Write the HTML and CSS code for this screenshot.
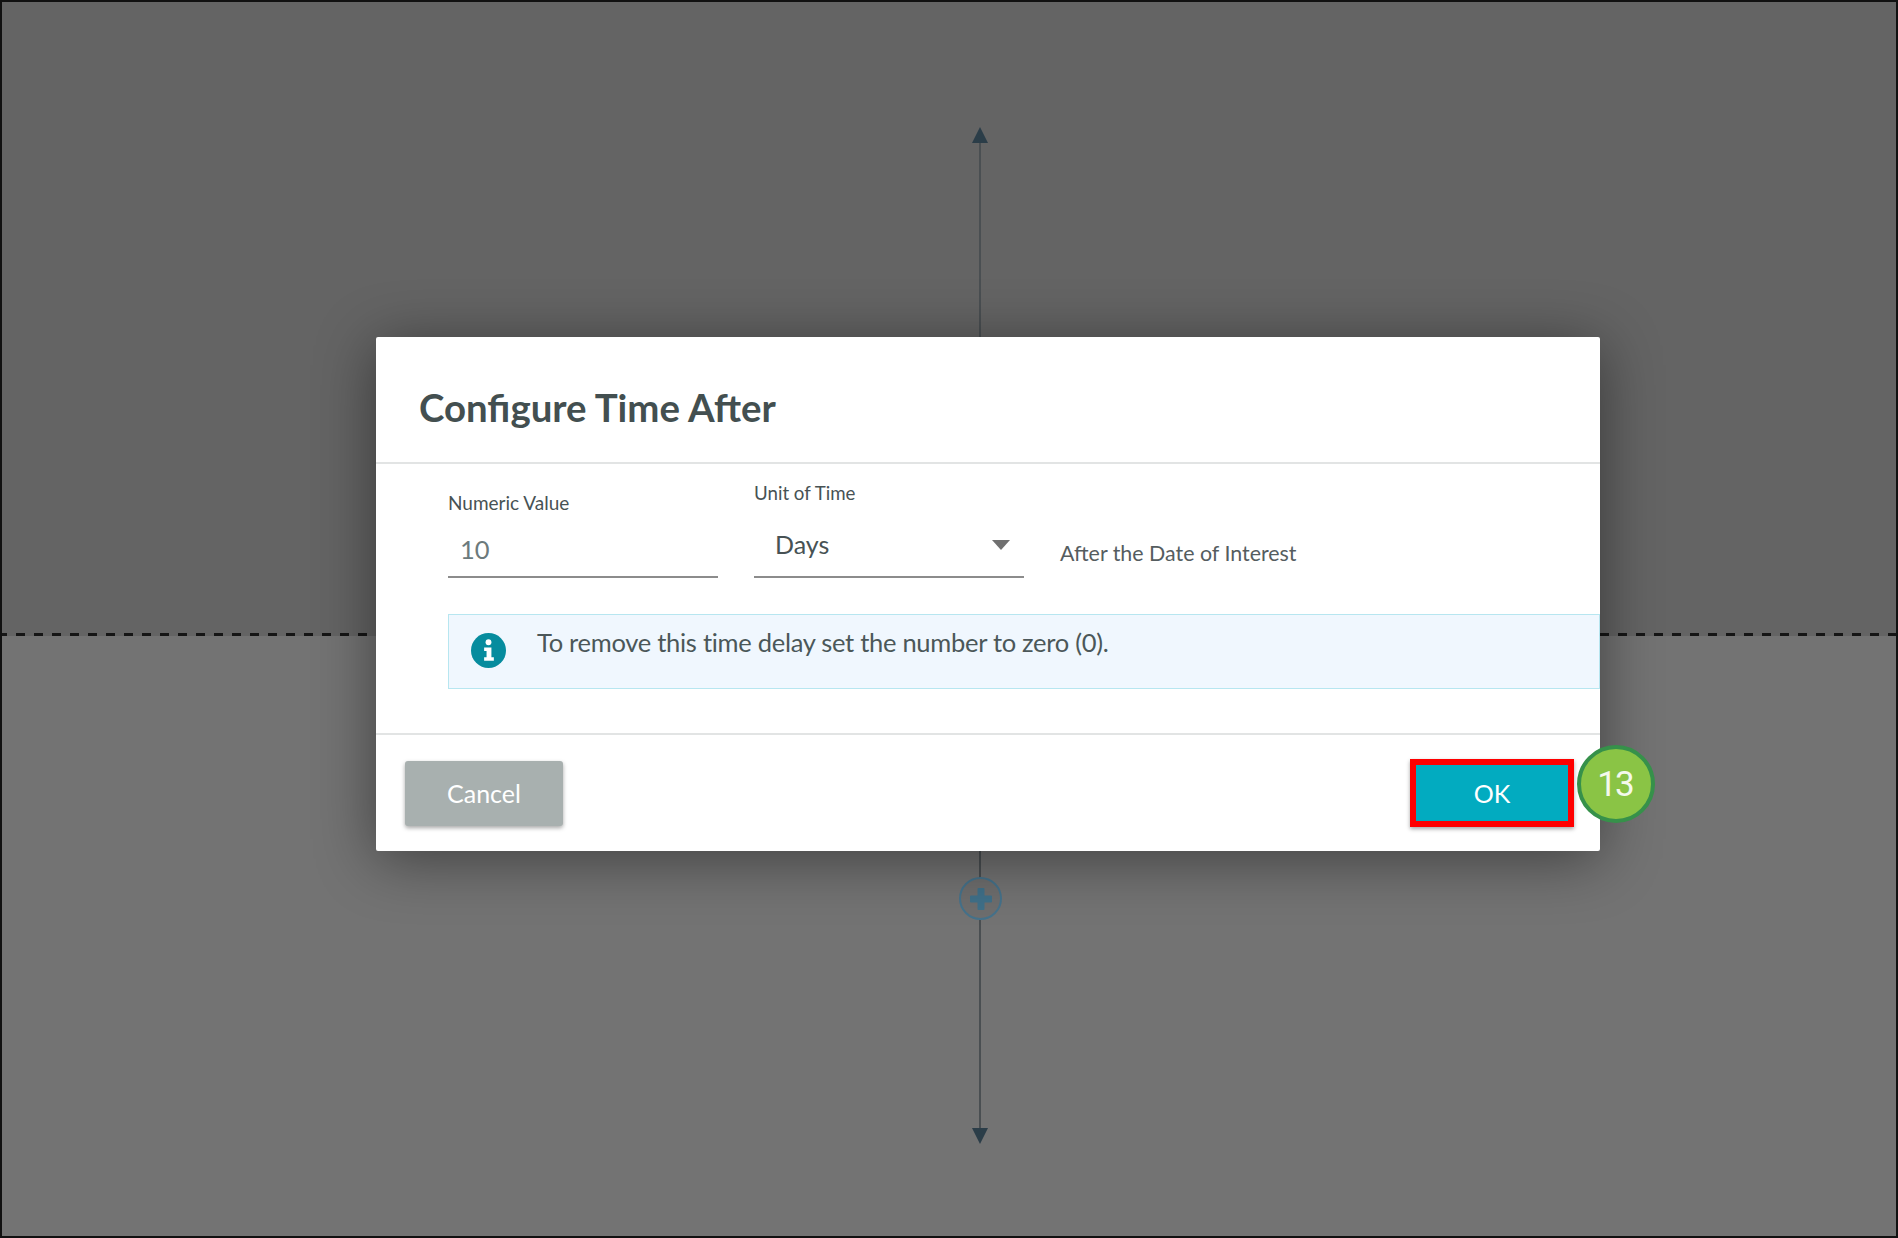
FILE: index.html
```html
<!DOCTYPE html>
<html lang="en">
<head>
<meta charset="utf-8">
<title>Configure Time After</title>
<link rel="stylesheet" href="styles.css">
</head>
<body>
<main class="canvas">
  <div class="lane lane-top"></div>
  <div class="lane lane-divider"></div>
  <div class="lane lane-bottom"></div>
  <div class="timeline timeline-up"></div>
  <div class="timeline timeline-down"></div>
  <svg class="arrow arrow-up" viewBox="0 0 16 16"><path d="M8 0 16 16H0z"/></svg>
  <svg class="arrow arrow-down" viewBox="0 0 16 16"><path d="M0 0H16L8 16z"/></svg>
  <div class="add-node">
    <svg class="add-icon" viewBox="0 0 22 22"><path d="M7.500 1a1 1 0 0 1 1-1h5a1 1 0 0 1 1 1v6.500H21a1 1 0 0 1 1 1v5a1 1 0 0 1-1 1h-6.500V21a1 1 0 0 1-1 1h-5a1 1 0 0 1-1-1v-6.500H1a1 1 0 0 1-1-1v-5a1 1 0 0 1 1-1h6.500z"/></svg>
  </div>

  <section class="modal">
    <header class="modal-header">
      <h1 class="modal-title">Configure Time After</h1>
    </header>
    <div class="modal-body">
      <div class="form-row">
        <div class="field">
          <span class="field-label">Numeric Value</span>
          <div class="field-control field-control-input">10</div>
        </div>
        <div class="field">
          <span class="field-label field-label-raised">Unit of Time</span>
          <div class="field-control field-control-select">
            <span>Days</span>
            <svg class="caret" viewBox="0 0 18 10"><path d="M0 0H18L9 10z"/></svg>
          </div>
        </div>
        <span class="form-suffix">After the Date of Interest</span>
      </div>
      <div class="alert">
        <svg class="alert-icon" viewBox="0 0 36 36">
          <circle cx="18" cy="18" r="18"/>
          <circle class="glyph" cx="18" cy="9.500" r="3"/>
          <path class="glyph" d="M13.500 15h7.500v10h2.500v3.500h-10V25H16v-6.500h-2.500z"/>
        </svg>
        <p class="alert-text">To remove this time delay set the number to zero (0).</p>
      </div>
    </div>
    <footer class="modal-footer">
      <button class="btn btn-cancel" type="button">Cancel</button>
      <button class="btn btn-ok" type="button">OK</button>
    </footer>
  </section>
  <div class="step-badge">13</div>
</main>
</body>
</html>
```
FILE: styles.css
```css
* { box-sizing: border-box; }
html, body { margin: 0; padding: 0; }
body {
  width: 1898px;
  height: 1238px;
  overflow: hidden;
  font-family: Lato, "Noto Sans", sans-serif;
  background: #000;
}
.canvas {
  position: relative;
  width: 1898px;
  height: 1238px;
  border: 2px solid #111;
  overflow: hidden;
  background: #737373;
}
.lane { position: absolute; left: 0; right: 0; }
.lane-top { top: 0; height: 633px; background: #646464; }
.lane-divider {
  top: 631px;
  height: 3px;
  background: repeating-linear-gradient(90deg, #151515 0 5px, #646464 5px 14px, #151515 14px 18px);
}
.lane-bottom { top: 634px; bottom: 0; background: #737373; }
.timeline { position: absolute; left: 977px; width: 2px; background: #4a4f52; }
.timeline-up { top: 140px; height: 200px; }
.timeline-down { top: 848px; height: 280px; }
.arrow { position: absolute; left: 970px; width: 16px; height: 16px; fill: #2b3d48; }
.arrow-up { top: 125px; }
.arrow-down { top: 1126px; }
.add-node {
  position: absolute;
  left: 957px;
  top: 875px;
  width: 43px;
  height: 43px;
  border: 2px solid #45728b;
  border-radius: 50%;
  background: #6e6e6e;
  display: flex;
  align-items: center;
  justify-content: center;
}
.add-icon { width: 22px; height: 22px; fill: #3f7089; }

.modal {
  position: absolute;
  left: 374px;
  top: 335px;
  width: 1224px;
  height: 514px;
  background: #fff;
  border-radius: 2px;
  box-shadow: 0 8px 60px rgba(0, 0, 0, 0.45);
  display: flex;
  flex-direction: column;
}
.modal-header {
  height: 127px;
  padding: 48px 43px 0;
  border-bottom: 2px solid #e2e4e4;
}
.modal-title {
  margin: 0;
  font-size: 38.400px;
  line-height: 44px;
  font-weight: 700;
  color: #434f50;
}
.modal-body {
  height: 271px;
  padding: 0 0 0 72px;
  border-bottom: 2px solid #e2e4e4;
}
.form-row {
  display: flex;
  align-items: flex-end;
  gap: 36px;
  height: 114px;
}
.field { width: 270px; }
.field-label {
  display: block;
  font-size: 19px;
  line-height: 22px;
  color: #475254;
  margin-bottom: 4px;
}
.field-label-raised { margin-bottom: 16px; font-size: 18.700px; }
.field-control {
  height: 60px;
  border-bottom: 2px solid #8c8c8c;
  font-size: 25px;
  display: flex;
  align-items: center;
}
.field-label-raised + .field-control { height: 58px; }
.field-control-input { color: #6c7a7c; padding-left: 12px; padding-top: 4px; font-size: 25.500px; }
.field-control-select {
  color: #475254;
  padding: 0 14px 8px 21px;
  justify-content: space-between;
}
.caret { width: 18px; height: 10px; fill: #707070; margin-top: 2px; }
.form-suffix {
  font-size: 21.400px;
  line-height: 26px;
  color: #555d5f;
  margin-bottom: 12px;
}
.alert {
  margin-top: 36px;
  height: 75px;
  border: 1px solid #b7e6f0;
  background: #f0f7fe;
  display: flex;
  padding: 18px 0 0 22px;
  gap: 31px;
}
.alert-icon { width: 35px; height: 35px; flex: none; fill: #068c9e; }
.alert-icon .glyph { fill: #fff; }
.alert-text {
  margin: 0;
  margin-top: -7px;
  font-size: 25.500px;
  letter-spacing: -0.280px;
  line-height: 32px;
  color: #4b5759;
}
.modal-footer {
  flex: 1;
  display: flex;
  justify-content: space-between;
  align-items: flex-start;
  padding: 26px 26px 0 29px;
}
.btn {
  font-family: inherit;
  font-size: 25px;
  color: #fff;
  border: 0;
  padding: 0;
  box-shadow: 0 2px 4px rgba(0, 0, 0, 0.35);
}
.btn-cancel {
  width: 158px;
  height: 65px;
  padding-bottom: 2px;
  background: #a8b0af;
  border-radius: 3px;
}
.btn-ok {
  width: 164px;
  height: 68px;
  margin-top: -2px;
  background: #02abc0;
  border: 6px solid #f00;
}
.step-badge {
  position: absolute;
  left: 1575px;
  top: 743px;
  width: 78px;
  height: 78px;
  padding-right: 2px;
  border-radius: 50%;
  background: #8ac445;
  border: 4px solid #36914a;
  color: #f4f9ec;
  font-family: Roboto, sans-serif;
  font-weight: 400;
  font-size: 35px;
  letter-spacing: -2px;
  display: flex;
  align-items: center;
  justify-content: center;
}
```
